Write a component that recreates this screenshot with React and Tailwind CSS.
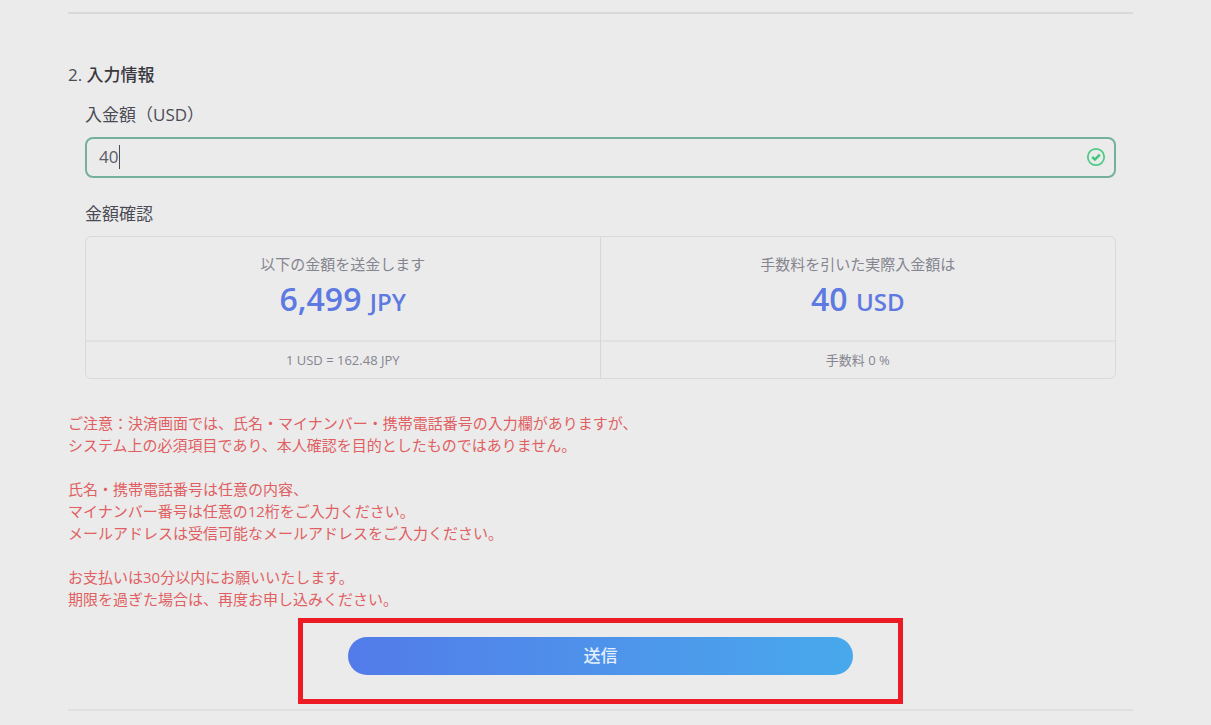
import { useState } from "react";

const NOTICES = [
  [
    "ご注意：決済画面では、氏名・マイナンバー・携帯電話番号の入力欄がありますが、",
    "システム上の必須項目であり、本人確認を目的としたものではありません。",
  ],
  [
    "氏名・携帯電話番号は任意の内容、",
    "マイナンバー番号は任意の12桁をご入力ください。",
    "メールアドレスは受信可能なメールアドレスをご入力ください。",
  ],
  ["お支払いは30分以内にお願いいたします。", "期限を過ぎた場合は、再度お申し込みください。"],
];

const ValidIcon = () => (
  <svg viewBox="0 0 20 20" className="h-5 w-5" fill="none" aria-hidden="true">
    <circle cx="10" cy="10" r="8.2" stroke="#4fcb85" strokeWidth="1.8" />
    <path d="M6.2 10l2.7 2.5 4.9-4.9" stroke="#3cc779" strokeWidth="2.4" />
  </svg>
);

const AmountCell = ({ label, amount, currency, note }) => (
  <div>
    <div className="flex h-[105px] flex-col items-center border-b-2 border-[#e1e1e2] pt-[15px]">
      <p className="text-[15px] leading-6 text-[#85858f]">{label}</p>
      <p className="mt-[3px] text-[32px] leading-10 font-semibold text-[#5d79e2]">
        {amount} <span className="text-2xl">{currency}</span>
      </p>
    </div>
    <p className="py-2 text-center text-[13px] leading-5 text-[#85858f]">{note}</p>
  </div>
);

export default function App() {
  const [amount, setAmount] = useState("40");

  return (
    <main className="min-h-screen bg-[#ebebeb] pt-3 pr-[78px] pl-[68px] font-['Open_Sans','Noto_Sans_CJK_JP',sans-serif] text-[#4b4b55]">
      <hr className="border-t-2 border-[#d9d9da]" />

      <form onSubmit={(e) => e.preventDefault()}>
        <h2 className="mt-[47px] text-[17px] leading-7">
          2. <span className="font-medium text-[#38383f]">入力情報</span>
        </h2>

        <div className="mt-3 px-[17px]">
          <label htmlFor="amount" className="block text-[17px] leading-7">
            入金額（USD）
          </label>
          <div className="relative mt-2">
            <input
              id="amount"
              type="text"
              inputMode="decimal"
              value={amount}
              onChange={(e) => setAmount(e.target.value)}
              className="block h-[41px] w-full rounded-lg border-2 border-[#74b09d] bg-transparent pr-10 pb-[2px] pl-3 text-[17px] text-[#5c5c68] caret-transparent outline-none"
            />
            {/* text cursor */}
            <span className="absolute top-2 left-[34px] h-6 w-px bg-[#4b4b55]" />
            <span className="absolute top-[10px] right-[10px]">
              <ValidIcon />
            </span>
          </div>

          <h3 className="mt-[22px] text-[17px] leading-7">金額確認</h3>
          <div className="mt-2 grid grid-cols-2 divide-x divide-[#d7d7d9] rounded-md border border-[#d9d9db]">
            <AmountCell label="以下の金額を送金します" amount="6,499" currency="JPY" note="1 USD = 162.48 JPY" />
            <AmountCell label="手数料を引いた実際入金額は" amount="40" currency="USD" note="手数料 0 %" />
          </div>
        </div>

        <div className="mt-[33px] space-y-[22px] text-[15px] leading-[22px] text-[#e05f62]">
          {NOTICES.map((lines) => (
            <p key={lines[0]}>
              {lines.map((line) => (
                <span key={line} className="block">
                  {line}
                </span>
              ))}
            </p>
          ))}
        </div>

        <div className="mx-auto mt-2 w-full max-w-[605px] border-5 border-[#ed1c24] px-[45px] pt-[14px] pb-6">
          <button
            type="submit"
            className="block h-[38px] w-full rounded-full bg-linear-to-r from-[#527be9] to-[#48a9ec] text-[17px] font-medium text-[#e4effc]"
          >
            送信
          </button>
        </div>
      </form>

      <hr className="mt-[5px] border-t-2 border-[#e0e0e1]" />
    </main>
  );
}
